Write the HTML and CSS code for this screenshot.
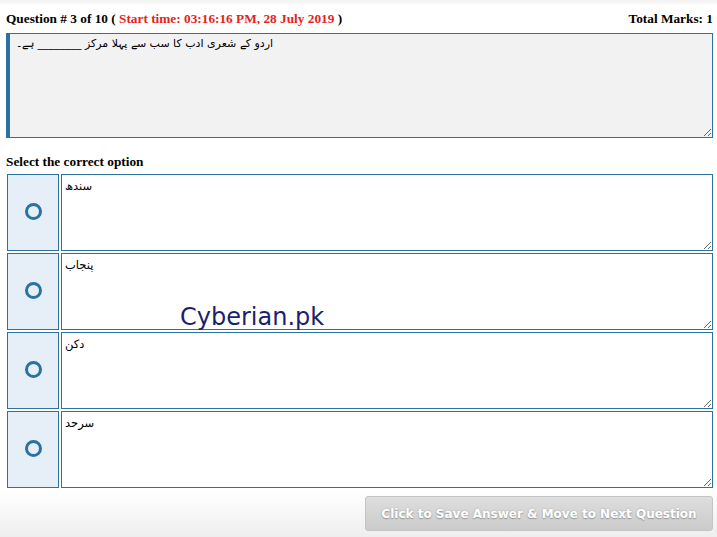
FILE: index.html
```html
<!DOCTYPE html>
<html lang="en">

<head>
    <meta charset="utf-8">
    <title>Quiz</title>
    <link rel="stylesheet" href="styles.css">
</head>

<body>
    <div class="topband"></div>

    <div class="qhead">
        <span>Question # 3 of 10 ( <span class="start">Start time: 03:16:16 PM, 28 July 2019</span> )</span>
        <span>Total Marks: 1</span>
    </div>

    <textarea class="question" readonly>اردو کے شعری ادب کا سب سے پہلا مرکز ________ ہے۔</textarea>

    <h4 class="selhead">Select the correct option</h4>

    <div class="options">
        <div class="radiocell"><span class="radio"></span></div>
        <textarea class="opttext" readonly>سندھ</textarea>

        <div class="radiocell"><span class="radio"></span></div>
        <textarea class="opttext" readonly>پنجاب</textarea>

        <div class="radiocell"><span class="radio"></span></div>
        <textarea class="opttext" readonly>دکن</textarea>

        <div class="radiocell"><span class="radio"></span></div>
        <textarea class="opttext" readonly>سرحد</textarea>
    </div>

    <div class="btnrow">
        <button class="savebtn" disabled>Click to Save Answer &amp; Move to Next Question</button>
    </div>

    <div class="watermark">Cyberian.pk</div>
</body>

</html>
```
FILE: styles.css
```css
/* page */
html, body {
    height: 100%;
}

body {
    margin: 0;
    position: relative;
    font-family: "Liberation Serif", serif;
    color: #000;
    background: linear-gradient(to bottom, #fff 0, #fff 490px, #eee 537px);
}

.topband {
    height: 4px;
    background: linear-gradient(to bottom, #f2f2f2, #fafafa);
}

/* header */
.qhead {
    display: flex;
    justify-content: space-between;
    padding: 7px 4px 0 6px;
    font-size: 13.3px;
    font-weight: bold;
    line-height: 16px;
}

.start {
    color: #e8221b;
}

.question {
    display: block;
    box-sizing: border-box;
    margin: 6px 0 0 6px;
    width: 707px;
    height: 105px;
    padding: 3px 6px;
    border: 1px solid #2a72a0;
    border-left: 4px solid #2a72a0;
    background: #f2f2f2;
    font-family: "DejaVu Sans", sans-serif;
    font-size: 11px;
    color: #000;
    outline: none;
}

.selhead {
    margin: 0;
    padding: 16px 0 0 6px;
    font-size: 13.3px;
    line-height: 16px;
}

/* options */
.options {
    display: grid;
    grid-template-columns: 52px 652px;
    grid-auto-rows: 77px;
    gap: 2px;
    margin: 4px 0 0 7px;
}

.radiocell {
    display: flex;
    align-items: center;
    justify-content: center;
    box-sizing: border-box;
    border: 1px solid #2a72a0;
    background: #e6eef7;
}

.radio {
    width: 11px;
    height: 11px;
    border: 3px solid #2a72a0;
    border-radius: 50%;
    margin: 0 0 2px 1px;
}

.opttext {
    box-sizing: border-box;
    width: 100%;
    height: 100%;
    margin: 0;
    padding: 4px 3px;
    border: 1px solid #2a72a0;
    background: #fff;
    font-family: "DejaVu Sans", sans-serif;
    font-size: 11.5px;
    color: #000;
    outline: none;
}

/* button */
.btnrow {
    display: flex;
    justify-content: flex-end;
    padding: 8px 4px 0 0;
}

.savebtn {
    width: 348px;
    height: 35px;
    border: 1px solid #c4c4c4;
    border-radius: 3px;
    background: linear-gradient(to bottom, #dedede, #cbcbcb);
    color: #fff;
    font-family: "DejaVu Sans", sans-serif;
    font-size: 12px;
    font-weight: bold;
    text-shadow: 0 1px 1px #999, 0 0 2px #aaa;
}

/* watermark over content */
.watermark {
    position: absolute;
    left: 180px;
    top: 303px;
    font-family: "DejaVu Sans", sans-serif;
    font-size: 24px;
    color: #1c1f70;
}
```
